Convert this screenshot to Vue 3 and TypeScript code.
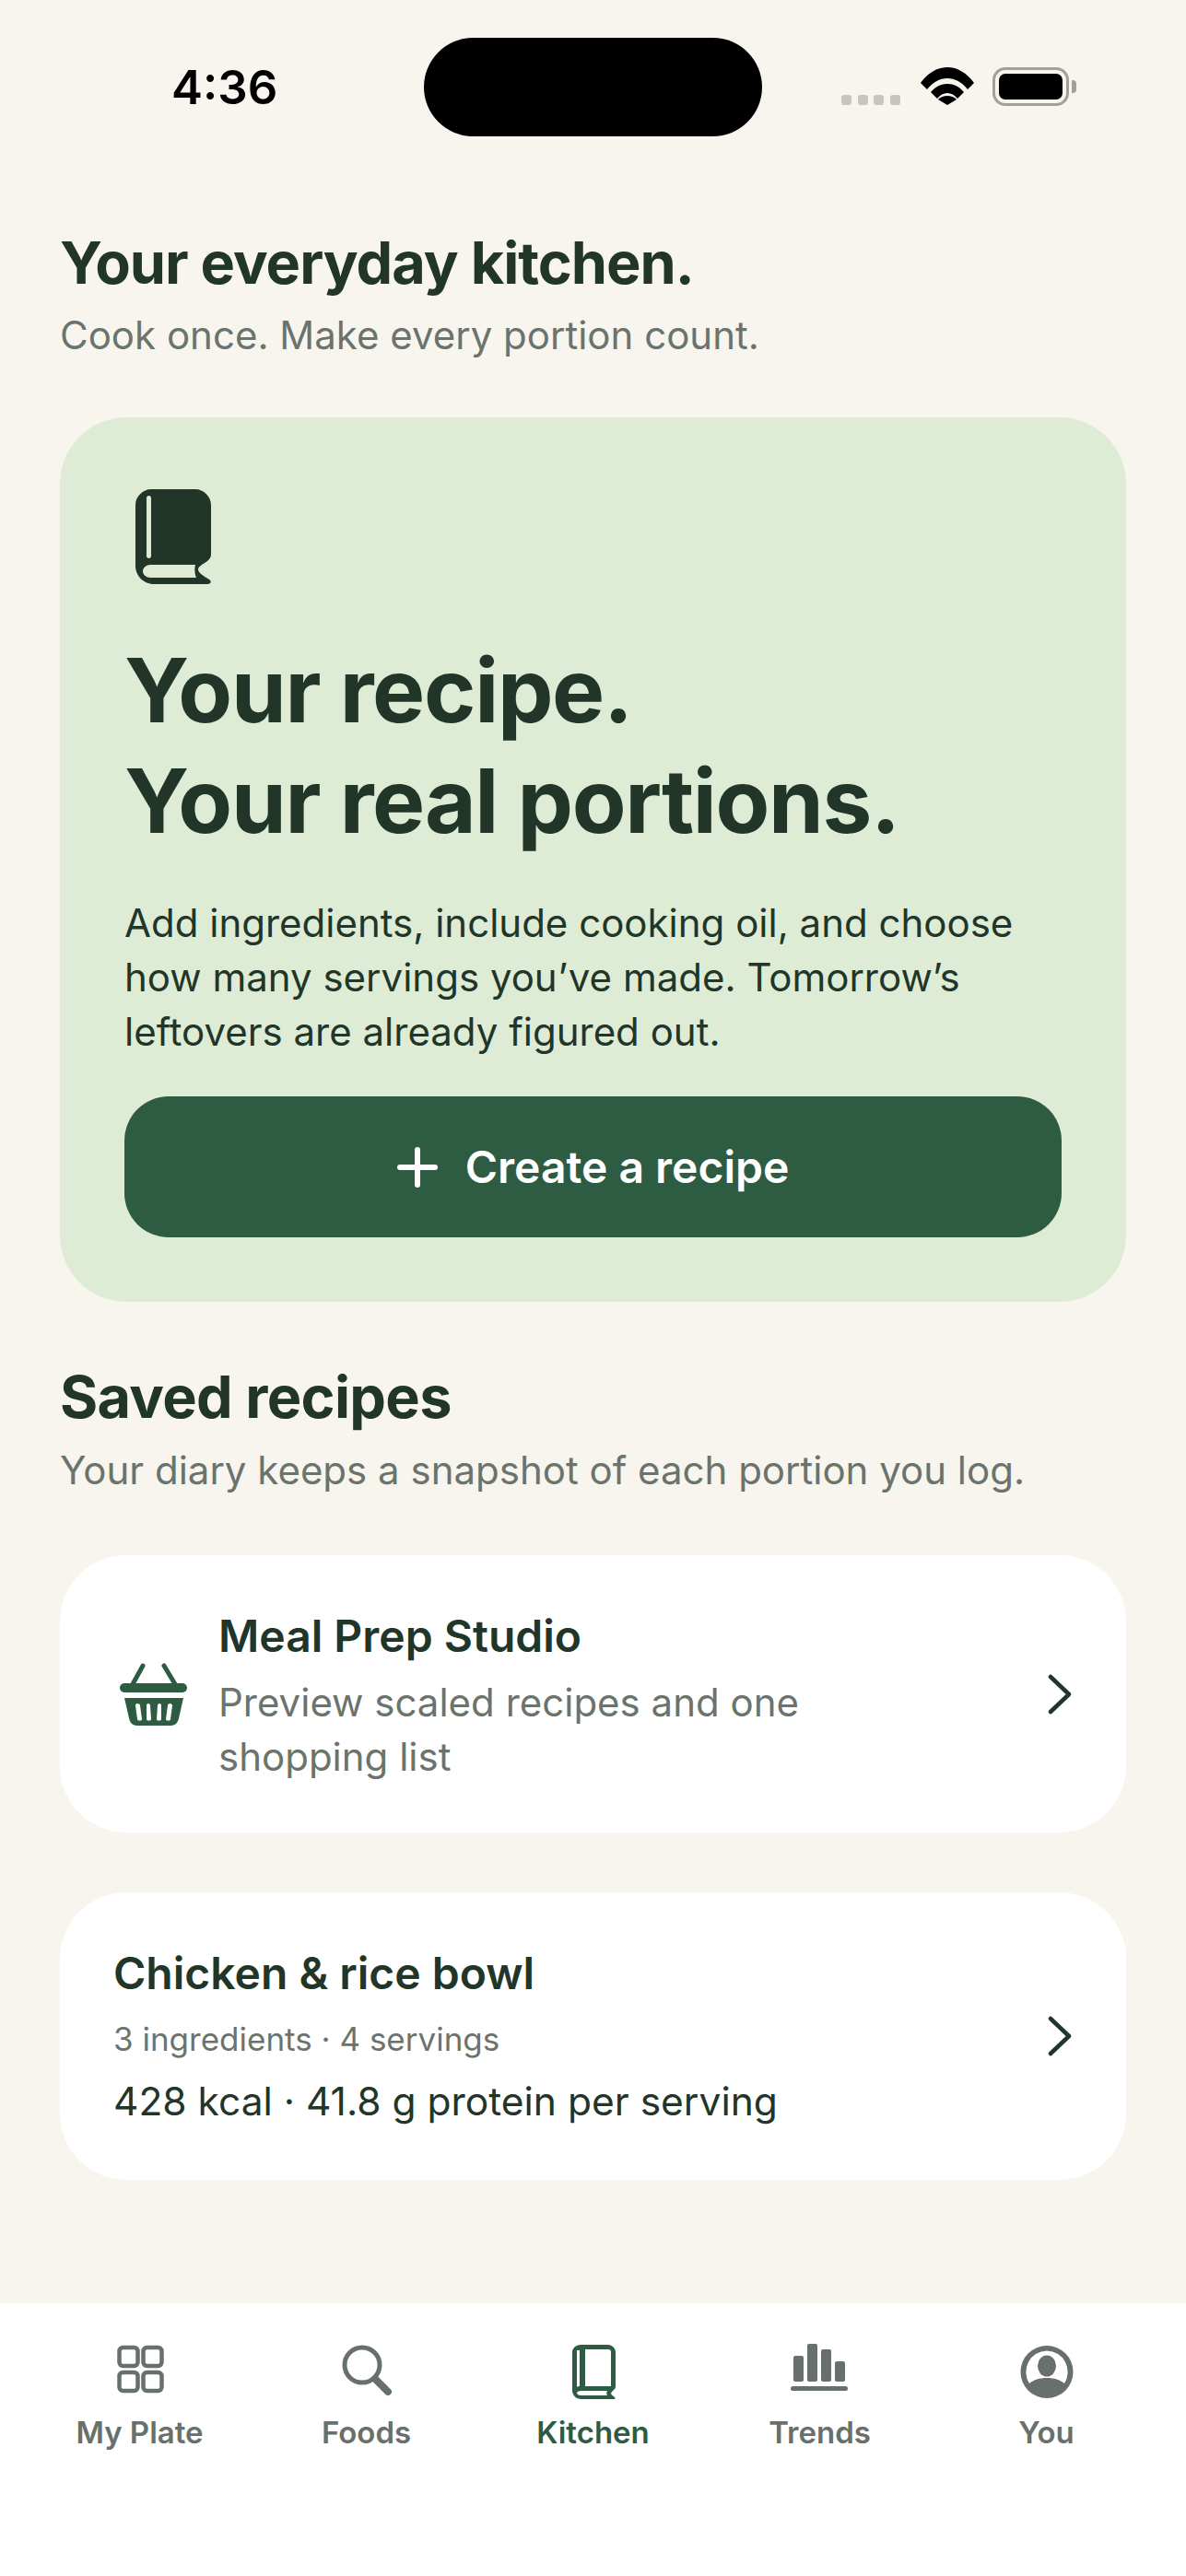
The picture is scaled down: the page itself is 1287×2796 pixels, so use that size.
<script setup lang="ts">
const tabs = [
  { key: "plate", label: "My Plate" },
  { key: "foods", label: "Foods" },
  { key: "kitchen", label: "Kitchen" },
  { key: "trends", label: "Trends" },
  { key: "you", label: "You" },
];
</script>

<template>
  <div class="page">
    <header class="status">
      <span class="time">4:36</span>
      <div class="island"></div>
      <div class="status-icons">
        <div class="dots"><i></i><i></i><i></i><i></i></div>
        <svg class="wifi" width="58" height="42" viewBox="0 0 58 42">
          <path d="M0 17C8 6 18 0 29 0s21 6 29 17l-7 7C45 16 37 12 29 12S13 16 7 24Z" />
          <path d="M11 27c5-6 11-9 18-9s13 3 18 9l-7 7c-3-4-7-6-11-6s-8 2-11 6Z" />
          <path d="M19 36c3-3 6-4 10-4s7 1 10 4L29 42Z" transform="translate(0 -1)" />
        </svg>
        <div class="battery">
          <div class="battery-body"><div class="battery-fill"></div></div>
          <div class="battery-nub"></div>
        </div>
      </div>
    </header>

    <main class="content">
      <h1 class="page-title">Your everyday kitchen.</h1>
      <p class="page-sub">Cook once. Make every portion count.</p>

      <section class="hero">
        <svg class="hero-icon" width="82" height="103" viewBox="0 0 82 103">
          <path fill="#213529" fill-rule="evenodd" d="M17 0H65C74 0 82 8 82 17V71C82 74 80 76 78 78C72 82 68 84 68 87C68 91 74 94 80 98C83 100 82 103 78 103H20C9 103 0 94 0 83V17C0 8 8 0 17 0ZM14.500 7C13 7 12 8 12 9.500V72.500C12 74 13 75 14.500 75S17 74 17 72.500V9.500C17 8 16 7 14.500 7ZM16 82C12 82 8 85 8 89S12 96 16 96H66C64 91 64 86 65 82Z" />
        </svg>
        <h2 class="hero-title">Your recipe.<br />Your real portions.</h2>
        <p class="hero-text">Add ingredients, include cooking oil, and choose how many servings you’ve made. Tomorrow’s leftovers are already figured out.</p>
        <button class="create-btn">
          <svg width="44" height="44" viewBox="0 0 44 44">
            <path d="M22 3V41M3 22H41" stroke="#fff" stroke-width="6" stroke-linecap="round" />
          </svg>
          <span>Create a recipe</span>
        </button>
      </section>

      <h2 class="section-title">Saved recipes</h2>
      <p class="page-sub section-sub">Your diary keeps a snapshot of each portion you log.</p>

      <section class="card studio">
        <svg class="basket" width="73" height="68" viewBox="0 0 73 68">
          <path d="M14 23L25 3M48 3L60 23" stroke="#2d5c43" stroke-width="5" stroke-linecap="round" fill="none" />
          <rect x="0" y="22" width="73" height="10" rx="5" fill="#2d5c43" />
          <path fill="#2d5c43" fill-rule="evenodd" d="M5 38H69L64 60C63 65 60 68 55 68H19C14 68 11 65 10 60ZM19 44C17.500 44 17 45 17 46L19 61C19 63 24 63 24 61L22 46C22 45 21 44 19 44ZM31 44C29.500 44 29 45 29 46V61C29 63 34 63 34 61L33 46C33 45 32 44 31 44ZM43 44C42 44 41 45 41 46L40 61C40 63 45 63 45 61L45 46C45 45 44.500 44 43 44ZM54 44C53 44 52 45 52 46L50 61C50 63 55 63 55 61L57 46C57 45 56 44 54 44Z" />
        </svg>
        <div class="card-main">
          <h3 class="card-title">Meal Prep Studio</h3>
          <p class="card-desc">Preview scaled recipes and one shopping list</p>
        </div>
        <svg class="chevron" width="28" height="44" viewBox="0 0 28 44">
          <path d="M4 3L24 22L4 41" fill="none" stroke="#213529" stroke-width="4.500" stroke-linecap="round" stroke-linejoin="round" />
        </svg>
      </section>

      <section class="card recipe">
        <div class="card-main">
          <h3 class="card-title">Chicken &amp; rice bowl</h3>
          <p class="recipe-meta">3 ingredients · 4 servings</p>
          <p class="recipe-macros">428 kcal · 41.8 g protein per serving</p>
        </div>
        <svg class="chevron" width="28" height="44" viewBox="0 0 28 44">
          <path d="M4 3L24 22L4 41" fill="none" stroke="#213529" stroke-width="4.500" stroke-linecap="round" stroke-linejoin="round" />
        </svg>
      </section>
    </main>

    <nav class="tabbar">
      <div v-for="tab in tabs" :key="tab.key" class="tab" :class="{ active: tab.key === 'kitchen' }">
        <svg class="tab-icon" width="64" height="60" viewBox="0 0 64 60">
          <g v-if="tab.key === 'plate'" fill="none" stroke="#67706a" stroke-width="4.500">
            <rect x="9.500" y="4" width="20" height="20" rx="4" />
            <rect x="35.500" y="4" width="20" height="20" rx="4" />
            <rect x="9.500" y="31" width="20" height="20" rx="4" />
            <rect x="35.500" y="31" width="20" height="20" rx="4" />
          </g>
          <g v-else-if="tab.key === 'foods'" fill="none" stroke="#67706a" stroke-linecap="round">
            <circle cx="27" cy="23" r="19" stroke-width="5" />
            <path d="M41 38L55 52" stroke-width="8" />
          </g>
          <g v-else-if="tab.key === 'kitchen'">
            <path fill="#2d5c43" fill-rule="evenodd" d="M18 1H48C52 1 56 5 56 9V46C56 48 55 49 54 50C52 52 51 53 51 54C51 55 53 56 55 58C56 59 56 60 54 60H19C13 60 9 56 9 50V9C9 5 13 1 18 1ZM14 7V47C15 46 16 46 17 46V7C15 7 14 7 14 7ZM23 6V46H51V9C51 7 50 6 48 6ZM19 51C16 51 14 52 14 53C14 55 16 56 19 56H47C46 54 46 53 47 51Z" />
          </g>
          <g v-else-if="tab.key === 'trends'" fill="#67706a">
            <rect x="3" y="13" width="11" height="28" rx="2" />
            <rect x="18" y="0" width="11" height="41" rx="2" />
            <rect x="33" y="6" width="11" height="35" rx="2" />
            <rect x="48" y="19" width="11" height="22" rx="2" />
            <rect x="0" y="46" width="62" height="5" rx="2.500" />
          </g>
          <g v-else fill="#67706a">
            <path fill-rule="evenodd" d="M32 2A28.500 28.500 0 1 1 32 59A28.500 28.500 0 1 1 32 2ZM32 7.500A23 23 0 0 0 13 43C18 39 24 37 32 37S46 39 51 43A23 23 0 0 0 32 7.500Z" />
            <ellipse cx="32" cy="24" rx="10" ry="11.500" />
          </g>
        </svg>
        <span class="tab-label">{{ tab.label }}</span>
      </div>
    </nav>
  </div>
</template>

<style>
body {
  margin: 0;
  background: #f8f5ef;
}
</style>

<style scoped>
* {
  box-sizing: border-box;
}

.page {
  width: 1287px;
  height: 2796px;
  display: flex;
  flex-direction: column;
  background: #f8f5ef;
  font-family: Inter, "Liberation Sans", sans-serif;
  color: #213529;
}

.status {
  height: 168px;
  padding: 41px 118px 0 186px;
  display: flex;
  align-items: flex-start;
  flex-shrink: 0;
}

.time {
  width: 112px;
  margin-top: 25px;
  font-size: 51px;
  line-height: 58px;
  font-weight: 600;
  color: #000;
  text-align: center;
}

.island {
  width: 367px;
  height: 107px;
  margin-left: 162px;
  border-radius: 54px;
  background: #000;
}

.status-icons {
  margin-left: 86px;
  margin-top: 32px;
  height: 42px;
  display: flex;
  align-items: flex-end;
}

.dots {
  display: flex;
  gap: 6.670px;
  padding-bottom: 1px;
}

.dots i {
  width: 11px;
  height: 11px;
  border-radius: 3px;
  background: #c6c6c1;
}

.wifi {
  margin-left: 22px;
  fill: #000;
}

.battery {
  margin-left: 20px;
  display: flex;
  align-items: center;
}

.battery-body {
  width: 83px;
  height: 42px;
  padding: 4px;
  border: 3px solid #a09f99;
  border-radius: 14px;
}

.battery-fill {
  width: 100%;
  height: 100%;
  border-radius: 7px;
  background: #000;
}

.battery-nub {
  width: 5px;
  height: 14px;
  margin-left: 3px;
  border-radius: 0 4px 4px 0;
  background: #a09f99;
}

.content {
  flex: 1;
  padding: 84px 65px 0;
}

.page-title {
  margin: 0;
  font-size: 63px;
  line-height: 66px;
  font-weight: 700;
  letter-spacing: -1px;
}

.page-sub {
  margin: 19px 0 0;
  font-size: 42px;
  line-height: 54px;
  color: #6b736d;
}

.hero {
  margin-top: 62px;
  height: 960px;
  padding: 78px 70px 70px;
  border-radius: 72px;
  background: #dfecd5;
}

.hero-icon {
  display: block;
  margin-left: 12px;
}

.hero-title {
  margin: 55px 0 0;
  font-size: 96px;
  line-height: 120px;
  font-weight: 700;
  letter-spacing: -1.300px;
}

.hero-text {
  margin: 43px 0 0;
  font-size: 42px;
  line-height: 59px;
}

.create-btn {
  width: 100%;
  height: 153px;
  margin-top: 41px;
  border: none;
  border-radius: 48px;
  background: #2d5c43;
  color: #fff;
  font: inherit;
  font-size: 48px;
  font-weight: 600;
  display: flex;
  align-items: center;
  justify-content: center;
  gap: 30px;
}

.section-title {
  margin: 67px 0 0;
  font-size: 63px;
  line-height: 72px;
  font-weight: 700;
  letter-spacing: -0.700px;
}

.section-sub {
  margin-top: 17px;
}

.card {
  background: #fff;
  border-radius: 72px;
  display: flex;
  align-items: center;
}

.studio {
  margin-top: 65px;
  height: 301px;
  padding: 0 58px 0 65px;
}

.studio .card-main {
  padding-top: 5px;
}

.recipe {
  margin-top: 65px;
  height: 312px;
  padding: 0 58px;
}

.basket {
  flex-shrink: 0;
  margin-right: 34px;
}

.card-main {
  flex: 1;
  min-width: 0;
}

.card-title {
  margin: 0;
  font-size: 48px;
  line-height: 60px;
  font-weight: 600;
}

.card-desc {
  margin: 12px 0 0;
  max-width: 700px;
  font-size: 42px;
  line-height: 59px;
  color: #6b736d;
}

.recipe-meta {
  margin: 17px 0 0;
  font-size: 35px;
  line-height: 48px;
  color: #6b736d;
}

.recipe-macros {
  margin: 17px 0 0;
  font-size: 42.500px;
  line-height: 54px;
}

.chevron {
  flex-shrink: 0;
}

.tabbar {
  height: 296px;
  flex-shrink: 0;
  padding: 0 28.500px;
  display: grid;
  grid-template-columns: repeat(5, 1fr);
  background: #fff;
}

.tab {
  display: flex;
  flex-direction: column;
  align-items: center;
  padding-top: 44px;
  color: #67706a;
}

.tab-icon {
  display: block;
}

.tab-label {
  margin-top: 16px;
  font-size: 33px;
  line-height: 40px;
  font-weight: 600;
}

.active .tab-label {
  color: #2d5c43;
}
</style>
